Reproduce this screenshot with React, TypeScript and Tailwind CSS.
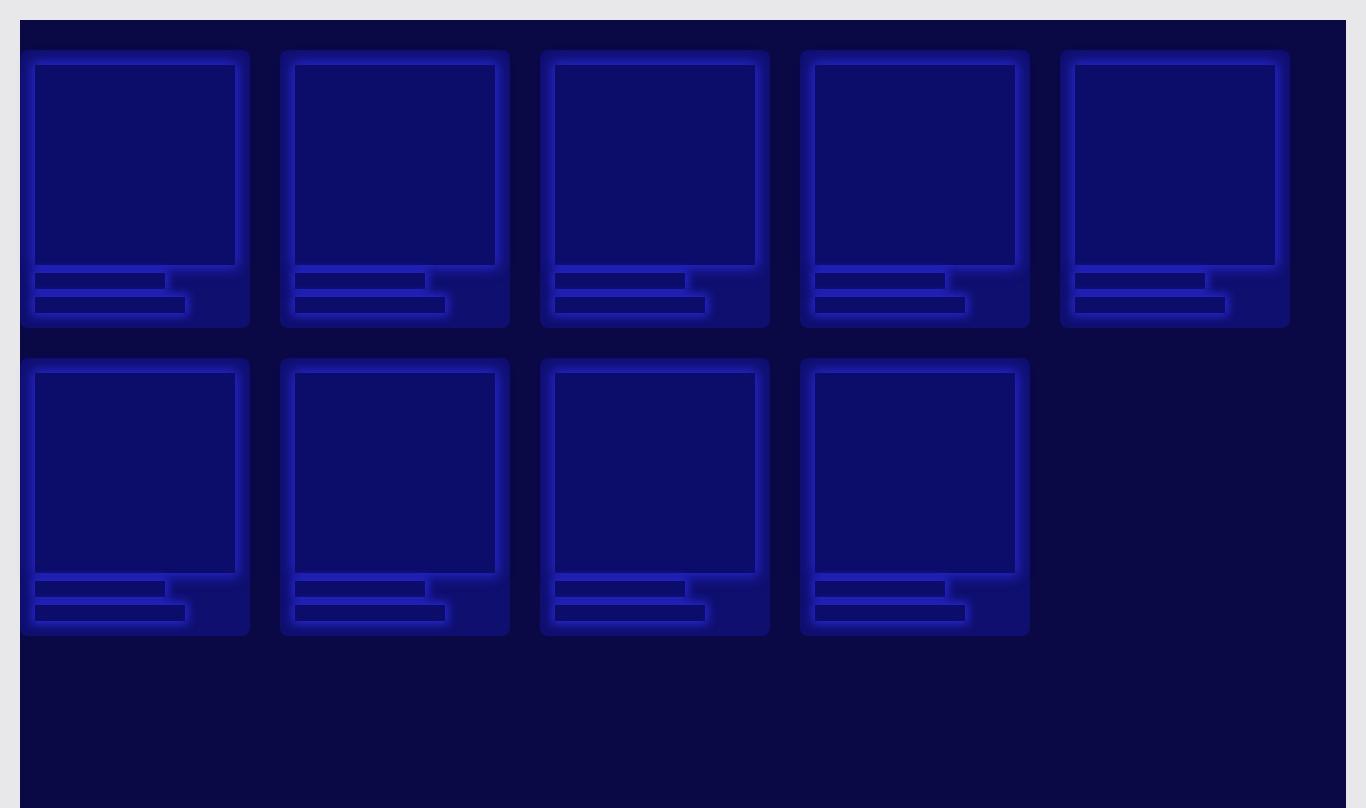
const cards = Array.from({ length: 9 }, (_, i) => i);

function SkeletonCard() {
  return (
    <div className="flex w-[230px] flex-col gap-2 rounded-lg bg-[#0f0f70] p-[15px]">
      <div className="h-[200px] w-[200px] bg-[#0c0c6a] shadow-[0_0_12px_3px_#2828d2]" />
      <div className="h-4 w-[130px] bg-[#0c0c6a] shadow-[0_0_10px_3px_#2828d2]" />
      <div className="h-4 w-[150px] bg-[#0c0c6a] shadow-[0_0_10px_3px_#2828d2]" />
    </div>
  );
}

export default function App() {
  return (
    <div className="min-h-screen bg-[#e8e8ea] pl-5 pr-5 pt-5">
      <div className="min-h-[800px] bg-[#0a0845] pt-[30px]">
        <div className="flex w-[1300px] flex-wrap gap-[30px]">
          {cards.map((i) => (
            <SkeletonCard key={i} />
          ))}
        </div>
      </div>
    </div>
  );
}
